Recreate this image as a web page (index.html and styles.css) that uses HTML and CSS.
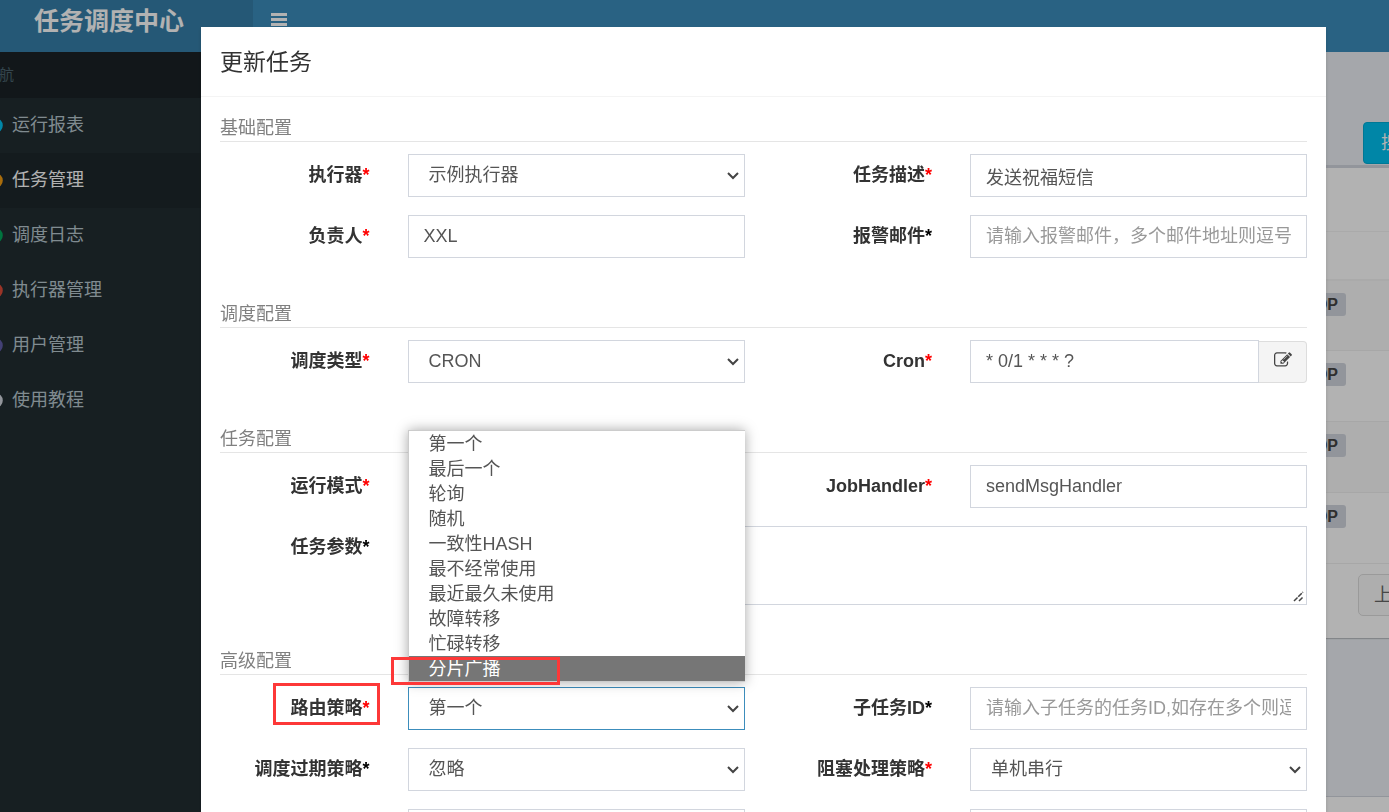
FILE: index.html
```html
<!DOCTYPE html>
<html lang="zh-CN">
<head>
<meta charset="utf-8">
<title>任务调度中心</title>
<link rel="stylesheet" href="styles.css">
</head>
<body>
<div class="app">
  <header class="topbar">
    <a class="logo" href="#">任务调度中心</a>
    <nav class="navbar">
      <button class="menu-toggle" type="button" aria-label="菜单">
        <svg viewBox="0 0 16 13" width="16" height="13" aria-hidden="true"><path d="M0 0h16v3H0zM0 5h16v3H0zM0 10h16v3H0z"/></svg>
      </button>
    </nav>
  </header>
  <div class="shell">
    <aside class="sidebar">
      <div class="sidebar-title">导航</div>
      <ul class="side-menu">
        <li><a href="#"><svg class="dot aqua" viewBox="0 0 15 15" aria-hidden="true"><circle cx="7.5" cy="7.5" r="5.8"/></svg>运行报表</a></li>
        <li class="active"><a href="#"><svg class="dot yellow" viewBox="0 0 15 15" aria-hidden="true"><circle cx="7.5" cy="7.5" r="5.8"/></svg>任务管理</a></li>
        <li><a href="#"><svg class="dot green" viewBox="0 0 15 15" aria-hidden="true"><circle cx="7.5" cy="7.5" r="5.8"/></svg>调度日志</a></li>
        <li><a href="#"><svg class="dot red" viewBox="0 0 15 15" aria-hidden="true"><circle cx="7.5" cy="7.5" r="5.8"/></svg>执行器管理</a></li>
        <li><a href="#"><svg class="dot purple" viewBox="0 0 15 15" aria-hidden="true"><circle cx="7.5" cy="7.5" r="5.8"/></svg>用户管理</a></li>
        <li><a href="#"><svg class="dot gray" viewBox="0 0 15 15" aria-hidden="true"><circle cx="7.5" cy="7.5" r="5.8"/></svg>使用教程</a></li>
      </ul>
    </aside>
    <main class="content">
      <div class="filters"><button class="search" type="button">搜索</button></div>
      <section class="box">
        <div class="box-tools"></div>
        <table class="jobs">
          <thead><tr><th></th></tr></thead>
          <tbody>
            <tr><td><span class="tag">STOP</span></td></tr>
            <tr><td><span class="tag">STOP</span></td></tr>
            <tr><td><span class="tag">STOP</span></td></tr>
            <tr><td><span class="tag">STOP</span></td></tr>
          </tbody>
        </table>
        <div class="pager"><button type="button">上页</button></div>
      </section>
      <footer class="footer"></footer>
    </main>
  </div>
</div>

<div class="backdrop">
  <div class="modal" role="dialog" aria-labelledby="modal-title">
    <h4 class="modal-title" id="modal-title">更新任务</h4>
    <form class="modal-body">
      <fieldset>
        <legend>基础配置</legend>
        <div class="rows">
          <label for="group">执行器<span class="req">*</span></label>
          <div class="cell"><select class="control" id="group"><option>示例执行器</option></select></div>
          <label for="desc">任务描述<span class="req">*</span></label>
          <div class="cell"><input class="control" id="desc" type="text" value="发送祝福短信"></div>
          <label for="author">负责人<span class="req">*</span></label>
          <div class="cell"><input class="control" id="author" type="text" value="XXL"></div>
          <label for="email">报警邮件<span class="opt">*</span></label>
          <div class="cell"><input class="control" id="email" type="text" placeholder="请输入报警邮件，多个邮件地址则逗号分隔"></div>
        </div>
      </fieldset>
      <fieldset>
        <legend>调度配置</legend>
        <div class="rows">
          <label for="type">调度类型<span class="req">*</span></label>
          <div class="cell"><select class="control" id="type"><option>CRON</option></select></div>
          <label for="cron">Cron<span class="req">*</span></label>
          <div class="cell input-group">
            <input class="control" id="cron" type="text" value="* 0/1 * * * ?">
            <button class="addon" type="button" aria-label="编辑 Cron">
              <svg viewBox="0 0 1792 1792" width="18" height="18" aria-hidden="true"><path d="M888 1184l116-116-152-152-116 116v56h96v96h56zm440-720q-16-16-33 1l-350 350q-17 17-1 33t33-1l350-350q17-17 1-33zm80 594v190q0 119-84.5 203.5t-203.5 84.5h-832q-119 0-203.5-84.5t-84.5-203.5v-832q0-119 84.5-203.5t203.5-84.5h832q63 0 117 25 15 7 18 23 3 17-9 29l-49 49q-14 14-32 8-23-6-45-6h-832q-66 0-113 47t-47 113v832q0 66 47 113t113 47h832q66 0 113-47t47-113v-126q0-13 9-22l64-64q15-15 35-7t20 29zm-96-738l288 288-672 672h-288v-288zm444 132l-92 92-288-288 92-92q28-28 68-28t68 28l152 152q28 28 28 68t-28 68z"/></svg>
            </button>
          </div>
        </div>
      </fieldset>
      <fieldset>
        <legend>任务配置</legend>
        <div class="rows">
          <label for="mode">运行模式<span class="req">*</span></label>
          <div class="cell"><select class="control" id="mode"><option>BEAN</option></select></div>
          <label for="handler">JobHandler<span class="req">*</span></label>
          <div class="cell"><input class="control" id="handler" type="text" value="sendMsgHandler"></div>
          <label for="param">任务参数<span class="opt">*</span></label>
          <div class="cell wide"><textarea class="control" id="param"></textarea></div>
        </div>
      </fieldset>
      <fieldset>
        <legend>高级配置</legend>
        <div class="rows">
          <label for="route"><span class="marked">路由策略<span class="req">*</span></span></label>
          <div class="cell">
            <div class="dropdown">
              <select class="control focused" id="route"><option>第一个</option></select>
              <ul class="options" role="listbox" aria-label="路由策略">
                <li role="option">第一个</li>
                <li role="option">最后一个</li>
                <li role="option">轮询</li>
                <li role="option">随机</li>
                <li role="option">一致性HASH</li>
                <li role="option">最不经常使用</li>
                <li role="option">最近最久未使用</li>
                <li role="option">故障转移</li>
                <li role="option">忙碌转移</li>
                <li role="option" class="current" aria-selected="true">分片广播</li>
              </ul>
            </div>
          </div>
          <label for="child">子任务ID<span class="opt">*</span></label>
          <div class="cell"><input class="control" id="child" type="text" placeholder="请输入子任务的任务ID,如存在多个则逗号分隔"></div>
          <label for="misfire">调度过期策略<span class="opt">*</span></label>
          <div class="cell"><select class="control" id="misfire"><option>忽略</option></select></div>
          <label for="block">阻塞处理策略<span class="req">*</span></label>
          <div class="cell"><select class="control" id="block"><option>单机串行</option></select></div>
          <label for="timeout">任务超时时间<span class="opt">*</span></label>
          <div class="cell"><input class="control" id="timeout" type="text"></div>
          <label for="retry">失败重试次数<span class="opt">*</span></label>
          <div class="cell"><input class="control" id="retry" type="text"></div>
        </div>
      </fieldset>
    </form>
  </div>
</div>
</body>
</html>
```

FILE: styles.css
```css
*,
*::before,
*::after {
  box-sizing: border-box;
}

body {
  margin: 0;
  height: 100vh;
  overflow: hidden;
  background: #222d32;
  color: #333;
  font: 18px/25px "Liberation Sans", "Noto Sans CJK SC", sans-serif;
}

button,
input,
select,
textarea {
  font: inherit;
}

ul {
  margin: 0;
  padding: 0;
  list-style: none;
}

/* Page behind the dialog, scrolled slightly right and down */
.app {
  display: flex;
  flex-direction: column;
  height: calc(100vh + 11px);
  margin: -11px -200px 0 -35px;
}

.topbar {
  display: flex;
  height: 63px;
}

.logo {
  width: 288px;
  background: #367fa9;
  color: #fff;
  font-size: 25px;
  font-weight: 700;
  line-height: 64px;
  text-align: center;
  text-decoration: none;
}

.navbar {
  flex: 1;
  background: #3c8dbc;
}

.menu-toggle {
  display: flex;
  align-items: center;
  height: 61px;
  padding: 0 18px;
  border: 0;
  background: none;
  fill: #fff;
}

.shell {
  display: flex;
  flex: 1;
}

.sidebar {
  width: 288px;
  background: #222d32;
}

.sidebar-title {
  padding: 10px 19px 11px;
  background: #1a2226;
  color: #4b646f;
  font-size: 15px;
}

.side-menu a {
  display: flex;
  align-items: center;
  height: 55px;
  padding-left: 19px;
  border-left: 4px solid transparent;
  color: #b8c7ce;
  text-decoration: none;
}

.side-menu .active a {
  border-left-color: #3c8dbc;
  background: #1e282c;
  color: #fff;
}

.dot {
  width: 15px;
  height: 15px;
  margin-right: 9px;
  fill: none;
  stroke: currentColor;
  stroke-width: 3;
}

.aqua { color: #00c0ef; }
.yellow { color: #f39c12; }
.green { color: #00a65a; }
.red { color: #dd4b39; }
.purple { color: #605ca8; }
.gray { color: #d2d6de; }

.content {
  display: flex;
  flex: 1;
  flex-direction: column;
  background: #ecf0f5;
}

.filters {
  display: flex;
  justify-content: flex-end;
  height: 113px;
  padding: 70px 126px 0 0;
}

.search {
  width: 100px;
  height: 42px;
  padding: 0 17px;
  border: 1px solid #00acd6;
  border-radius: 4px;
  background: #00c0ef;
  color: #fff;
  text-align: left;
}

.box {
  border-top: 3px solid #d2d6de;
  background: #fff;
  box-shadow: 0 1px 1px rgba(0, 0, 0, 0.2);
}

.box-tools {
  height: 63px;
}

.jobs {
  width: 100%;
  border-collapse: collapse;
}

.jobs th {
  height: 48px;
  border-top: 1px solid #f4f4f4;
  border-bottom: 2px solid #f4f4f4;
}

.jobs td {
  height: 71px;
  padding: 11px 243px 0 0;
  border-bottom: 1px solid #f0f0f0;
  text-align: right;
  vertical-align: top;
}

.jobs tbody tr:nth-child(odd) {
  background: #f9f9f9;
}

.tag {
  display: inline-block;
  padding: 0 8px;
  border-radius: 3px;
  background: #d2d6de;
  color: #444;
  font-size: 16px;
  font-weight: 700;
  line-height: 23px;
}

.pager {
  display: flex;
  justify-content: flex-end;
  padding: 10px 161px 22px 0;
}

.pager button {
  width: 70px;
  height: 42px;
  padding: 0 15px;
  border: 1px solid #ddd;
  border-radius: 5px;
  background: #fafafa;
  color: #666;
  text-align: left;
}

.footer {
  height: 16px;
  margin-top: auto;
  border-top: 1px solid #d2d6de;
  background: #fff;
}

/* Dialog */
.backdrop {
  position: fixed;
  inset: 0;
  overflow: hidden;
  padding: 27px 63px 0 201px;
  background: rgba(0, 0, 0, 0.3);
}

.modal {
  background: #fff;
  box-shadow: 0 2px 4px rgba(0, 0, 0, 0.15);
}

.modal-title {
  margin: 0;
  padding: 19px 19px 18px;
  border-bottom: 1px solid #f4f4f4;
  font-size: 23px;
  font-weight: 400;
  line-height: 32px;
}

.modal-body {
  display: flex;
  flex-direction: column;
  gap: 43px;
  padding: 18px 0;
}

fieldset {
  min-width: 0;
  margin: 0;
  padding: 0;
  border: 0;
}

legend {
  width: calc(100% - 38px);
  margin: 0 19px 12px;
  padding: 0;
  border-bottom: 1px solid #e5e5e5;
  color: #808080;
  line-height: 26px;
}

.rows {
  display: grid;
  grid-template-columns: 2fr 4fr 2fr 4fr;
  row-gap: 18px;
}

.rows label {
  min-width: 0;
  padding: 9px 19px 0;
  font-weight: 700;
  text-align: right;
  white-space: nowrap;
}

.req {
  color: #f00;
}

.opt {
  color: #000;
}

.cell {
  min-width: 0;
  padding: 0 19px;
}

.wide {
  grid-column: span 3;
}

.control {
  display: block;
  width: 100%;
  height: 43px;
  padding: 0 15px;
  border: 1px solid #d2d6de;
  border-radius: 0;
  outline: 0;
  background: #fff;
  color: #555;
}

.control::placeholder {
  color: #999;
}

select.control {
  padding: 0 30px 0 20px;
  appearance: none;
  background: #fff url("data:image/svg+xml,%3Csvg xmlns='http://www.w3.org/2000/svg' width='12' height='8' viewBox='0 0 12 8'%3E%3Cpath d='M1 1l5 5 5-5' fill='none' stroke='%23444' stroke-width='2'/%3E%3C/svg%3E") no-repeat right 5px center;
}

textarea.control {
  height: 79px;
}

textarea::-webkit-resizer {
  background: url("data:image/svg+xml,%3Csvg xmlns='http://www.w3.org/2000/svg' width='11' height='11' viewBox='0 0 11 11'%3E%3Cpath d='M1 10l9-9M6 10l4-4' fill='none' stroke='%23444' stroke-width='1.5' stroke-dasharray='5 1'/%3E%3C/svg%3E") no-repeat center;
}

select.focused {
  border-color: #3c8dbc;
}

.input-group {
  display: flex;
  align-items: flex-end;
}

.input-group .control {
  flex: 1;
  min-width: 0;
}

.addon {
  display: flex;
  align-items: center;
  justify-content: center;
  width: 48px;
  height: 42px;
  padding: 0 0 4px;
  border: 1px solid #ddd;
  border-left: 0;
  border-radius: 0 4px 4px 0;
  background: #f4f4f4;
  fill: #444;
}

.dropdown {
  position: relative;
}

.options {
  position: absolute;
  right: 0;
  bottom: calc(100% + 5px);
  left: 0;
  border: 1px solid #ccc;
  border-right: 0;
  background: #fff;
  box-shadow: 0 0 12px rgba(0, 0, 0, 0.35);
  color: #555;
}

.options li {
  padding: 2px 0 0 20px;
  line-height: 23px;
}

.options .current {
  position: relative;
  background: #767676;
  color: #fff;
}

/* Red call-out frames */
.marked {
  position: relative;
}

.marked::after,
.current::after {
  content: "";
  position: absolute;
  border: 3px solid #fd3838;
}

.marked::after {
  inset: -15px -10px -7px -17px;
}

.current::after {
  top: 1px;
  bottom: -4px;
  left: -18px;
  width: 169px;
}
```
